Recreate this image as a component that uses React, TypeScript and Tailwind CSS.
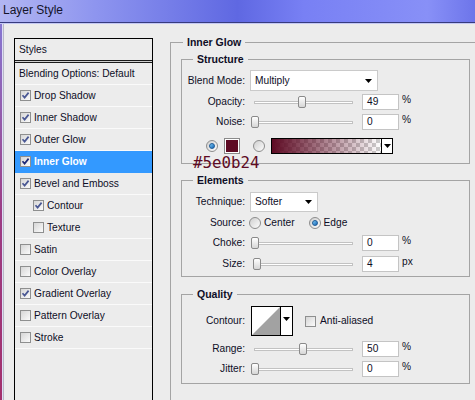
import React from "react";

const styles = [
  { label: "Drop Shadow", checked: true },
  { label: "Inner Shadow", checked: true },
  { label: "Outer Glow", checked: true },
  { label: "Inner Glow", checked: true, active: true },
  { label: "Bevel and Emboss", checked: true },
  { label: "Contour", checked: true, indent: true },
  { label: "Texture", checked: false, indent: true },
  { label: "Satin", checked: false },
  { label: "Color Overlay", checked: false },
  { label: "Gradient Overlay", checked: true },
  { label: "Pattern Overlay", checked: false },
  { label: "Stroke", checked: false },
];

function Check({ checked, dark }: { checked: boolean; dark?: boolean }) {
  return (
    <div className="w-[11px] h-[11px] flex-shrink-0 border border-[#8e8f8f] bg-gradient-to-br from-[#d6d6d6] to-[#fbfbfb] flex items-center justify-center">
      {checked && (
        <svg width="9" height="9" viewBox="0 0 9 9">
          <path d="M1.5 4.2 L3.6 6.6 L7.6 1.6" fill="none" stroke={dark ? "#1e2a78" : "#4a5894"} strokeWidth="1.7" />
        </svg>
      )}
    </div>
  );
}

function Radio({ on }: { on?: boolean }) {
  return (
    <div className="w-[12px] h-[12px] flex-shrink-0 rounded-full border border-[#8d8d8d] bg-gradient-to-br from-[#cfcfcf] to-[#fdfdfd] flex items-center justify-center">
      {on && <div className="w-[6px] h-[6px] rounded-full bg-gradient-to-br from-[#7ccaf6] to-[#0f64b4] border border-[#1d5a96]" />}
    </div>
  );
}

function Arrow() {
  return (
    <svg width="7" height="4" viewBox="0 0 7 4">
      <polygon points="0,0 7,0 3.5,4" fill="#000" />
    </svg>
  );
}

function Dropdown({ value, width, height }: { value: string; width: string; height: string }) {
  return (
    <div className={`ml-[5px] ${width} ${height} bg-white border border-[#cacaca] flex items-center justify-between pl-[4px] pr-[5px]`}>
      <span>{value}</span>
      <Arrow />
    </div>
  );
}

function Label({ text }: { text: string }) {
  return <span className="w-[63px] flex-shrink-0 text-right">{text}</span>;
}

function SliderRow({ label, pct, value, unit, className }: { label: string; pct: number; value: string; unit: string; className: string }) {
  return (
    <div className={`h-[16px] flex items-center ${className}`}>
      <Label text={label} />
      <div className="relative w-[104px] h-[16px] ml-[6px] flex-shrink-0">
        <div className="absolute left-[3px] right-[2px] top-[7px] h-[3px] border border-[#c2c2c2] bg-white" />
        <div
          className="absolute top-[2px] w-[8px] h-[12px] rounded-[2px] border border-[#8a8a8a] bg-gradient-to-b from-white to-[#d6d6d6]"
          style={{ left: `${pct * 0.96}px` }}
        />
      </div>
      <div className="ml-[7px] w-[37px] h-[16px] flex-shrink-0 bg-white border border-[#c4c4c4] flex items-center pl-[4px]">{value}</div>
      <span className="ml-[3px] self-start">{unit}</span>
    </div>
  );
}

function Group({ title, className, children }: { title: string; className: string; children: React.ReactNode }) {
  return (
    <fieldset className={`border border-[#a4a4a4] flex-shrink-0 ${className}`}>
      <legend className="ml-[11px] px-[4px] font-bold text-[10.5px] leading-[13px]">{title}</legend>
      {children}
    </fieldset>
  );
}

export default function App() {
  return (
    <div className="w-[475px] h-[400px] overflow-hidden bg-[#ececec] font-['Liberation_Sans',Arial,sans-serif] text-[10.2px] leading-[12px] text-[#0e0e26] flex flex-col">
      {/* title bar */}
      <div className="h-[22px] flex-shrink-0 bg-[linear-gradient(to_right,#b2b6f2_0%,#8e95ef_20%,#5f68e2_50%,#7880f4_64%,#8890f7_90%,#6d75ea_100%)] pl-[3px] pt-[3px]">
        <span className="text-[12px] leading-[14px] text-[#14142a]">Layer Style</span>
      </div>
      <div className="h-px flex-shrink-0 bg-[#373b7e]" />
      <div className="h-px flex-shrink-0 bg-[#c4c8f4]" />

      <div className="flex flex-1 min-h-0 overflow-hidden">
        <div className="w-[2px] flex-shrink-0 bg-gradient-to-b from-[#8676d2] via-[#9c3c84] to-[#a3306c]" />
        <div className="w-px flex-shrink-0 bg-[#dedef6]" />
        <div className="w-px flex-shrink-0 bg-[#b8b8c6]" />

        <div className="flex items-start flex-shrink-0">
          {/* left list */}
          <div className="ml-[10px] mt-[14px] w-[139px] h-[380px] flex-shrink-0 border border-black">
            <div className="h-[21px] flex items-center pl-[4px]">Styles</div>
            <div className="h-[3px] border-y border-[#1a1a1a] bg-[#cfcfcf]" />
            <div className="h-[22px] flex items-center pl-[4px] border-b border-[#fafafa]">Blending Options: Default</div>
            {styles.map((s) => (
              <div
                key={s.label}
                className={`h-[22px] flex items-center border-b ${s.indent ? "pl-[18px]" : "pl-[5px]"} ${
                  s.active ? "bg-[#3399ff] border-[#3399ff] text-white font-bold" : "border-[#fafafa]"
                }`}
              >
                <Check checked={s.checked} dark={s.active} />
                <span className="ml-[3px]">{s.label}</span>
              </div>
            ))}
          </div>

          {/* right settings */}
          <div className="relative ml-[17px] mt-[12px] flex-shrink-0">
            <Group title="Inner Glow" className="w-[320px] h-[400px] [&>legend]:ml-[12px]">
              <Group title="Structure" className="ml-[10px] mt-[4px] w-[289px] pt-[4px] pb-[9px]">
                <div className="h-[21px] flex items-center">
                  <Label text="Blend Mode:" />
                  <Dropdown value="Multiply" width="w-[128px]" height="h-[21px]" />
                </div>
                <SliderRow label="Opacity:" pct={49} value="49" unit="%" className="mt-[3px]" />
                <SliderRow label="Noise:" pct={0} value="0" unit="%" className="mt-[4px]" />
                <div className="h-[16px] mt-[8px] flex items-center">
                  <div className="ml-[24px]">
                    <Radio on />
                  </div>
                  <div className="ml-[6px] w-[16px] h-[16px] border border-[#8a8a8a] p-px bg-white">
                    <div className="w-full h-full bg-[#5e0b24]" />
                  </div>
                  <div className="ml-[13px]">
                    <Radio />
                  </div>
                  <div className="ml-[6px] w-[122px] h-[16px] border border-black flex">
                    <svg width="109" height="14" viewBox="0 0 109 14">
                      <defs>
                        <pattern id="chk" width="8" height="8" patternUnits="userSpaceOnUse">
                          <rect width="8" height="8" fill="#fff" />
                          <rect width="4" height="4" fill="#cdcdcd" />
                          <rect x="4" y="4" width="4" height="4" fill="#cdcdcd" />
                        </pattern>
                        <linearGradient id="fade" x1="0" x2="1" y1="0" y2="0">
                          <stop offset="0" stopColor="#5e0b24" stopOpacity="1" />
                          <stop offset="1" stopColor="#5e0b24" stopOpacity="0" />
                        </linearGradient>
                      </defs>
                      <rect width="109" height="14" fill="url(#chk)" />
                      <rect width="109" height="14" fill="url(#fade)" />
                    </svg>
                    <div className="flex-1 border-l border-black bg-white flex items-center justify-center">
                      <Arrow />
                    </div>
                  </div>
                </div>
              </Group>

              <Group title="Elements" className="ml-[10px] mt-[10px] w-[289px] pt-[5px] pb-[4px]">
                <div className="h-[20px] flex items-center">
                  <Label text="Technique:" />
                  <Dropdown value="Softer" width="w-[68px]" height="h-[20px]" />
                </div>
                <div className="h-[16px] mt-[3px] flex items-center">
                  <Label text="Source:" />
                  <div className="ml-[4px]">
                    <Radio />
                  </div>
                  <span className="ml-[3px]">Center</span>
                  <div className="ml-[14px]">
                    <Radio on />
                  </div>
                  <span className="ml-[3px]">Edge</span>
                </div>
                <SliderRow label="Choke:" pct={0} value="0" unit="%" className="mt-[4px]" />
                <SliderRow label="Size:" pct={2} value="4" unit="px" className="mt-[5px]" />
              </Group>

              <Group title="Quality" className="ml-[10px] mt-[11px] w-[289px] pt-[5px] pb-[6px]">
                <div className="h-[30px] flex items-center">
                  <Label text="Contour:" />
                  <div className="ml-[6px] w-[42px] h-[30px] border border-black bg-white flex">
                    <svg width="28" height="28" viewBox="0 0 28 28">
                      <polygon points="0,28 28,0 28,28" fill="#a2a2a2" />
                    </svg>
                    <div className="flex-1 border-l border-black flex items-start justify-center pt-[10px]">
                      <Arrow />
                    </div>
                  </div>
                  <div className="ml-[12px]">
                    <Check checked={false} />
                  </div>
                  <span className="ml-[4px]">Anti-aliased</span>
                </div>
                <SliderRow label="Range:" pct={50} value="50" unit="%" className="mt-[5px]" />
                <SliderRow label="Jitter:" pct={0} value="0" unit="%" className="mt-[4px]" />
              </Group>
            </Group>

            {/* colour annotation */}
            <span className="absolute left-[23px] top-[119px] font-['DejaVu_Sans_Mono',monospace] text-[15.8px] leading-none text-[#5e0b24]">
              #5e0b24
            </span>
          </div>
        </div>
      </div>
    </div>
  );
}
